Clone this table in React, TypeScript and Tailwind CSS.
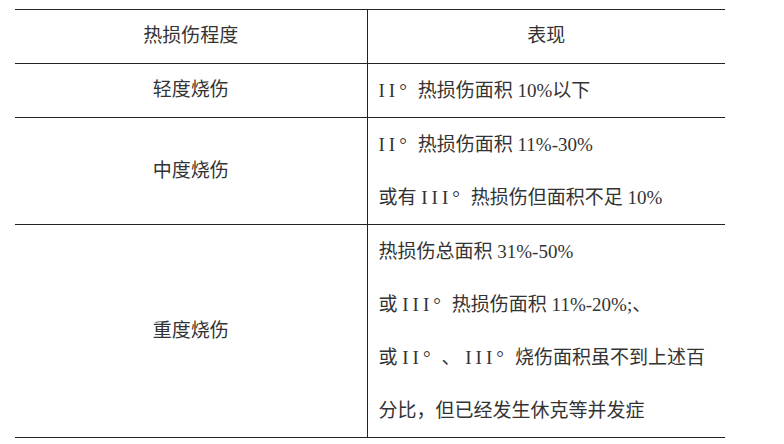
type Part = string | { rn: string };

const rows: { level: string; lines: Part[][] }[] = [
  { level: '轻度烧伤', lines: [[{ rn: 'II°' }, '热损伤面积 10%以下']] },
  {
    level: '中度烧伤',
    lines: [
      [{ rn: 'II°' }, '热损伤面积 11%-30%'],
      ['或有 ', { rn: 'III°' }, '热损伤但面积不足 10%'],
    ],
  },
  {
    level: '重度烧伤',
    lines: [
      ['热损伤总面积 31%-50%'],
      ['或 ', { rn: 'III°' }, '热损伤面积 11%-20%;、'],
      ['或 ', { rn: 'II°' }, '、 ', { rn: 'III°' }, '烧伤面积虽不到上述百'],
      ['分比，但已经发生休克等并发症'],
    ],
  },
];

function Line({ parts }: { parts: Part[] }) {
  return (
    <div className="leading-[53px] whitespace-pre">
      {parts.map((p, i) =>
        typeof p === 'string' ? (
          <span key={i}>{p}</span>
        ) : (
          <span key={i} className="tracking-[4px] mr-[7px]">
            {p.rn}
          </span>
        )
      )}
    </div>
  );
}

export default function App() {
  return (
    <div
      className="w-[784px] h-[444px] bg-white pt-[9px] pl-[15px] text-[#333] text-[19px]"
      style={{ fontFamily: '"Liberation Serif", "Noto Sans CJK SC", serif' }}
    >
      <table className="w-[710px] border-collapse">
        <thead>
          <tr className="border-t border-b border-[#222] h-[54px]">
            <th className="w-[352px] font-normal text-center border-r border-[#222]">热损伤程度</th>
            <th className="font-normal text-center">表现</th>
          </tr>
        </thead>
        <tbody>
          {rows.map((row) => (
            <tr key={row.level} className="border-b border-[#222]">
              <td className="text-center align-middle border-r border-[#222]">{row.level}</td>
              <td className="pl-[11px]">
                {row.lines.map((line, i) => (
                  <Line key={`line-${i}`} parts={line} />
                ))}
              </td>
            </tr>
          ))}
        </tbody>
      </table>
    </div>
  );
}
